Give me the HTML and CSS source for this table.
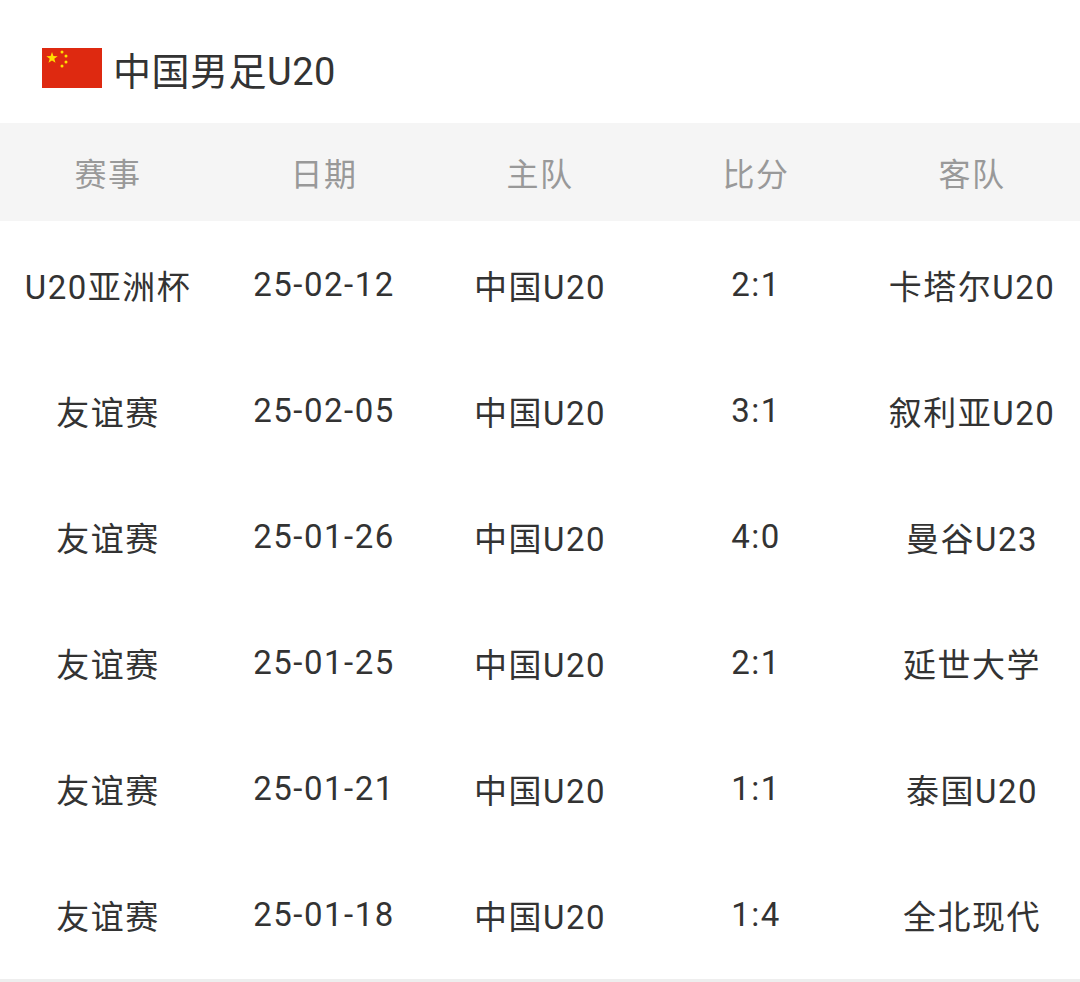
FILE: index.html
```html
<!DOCTYPE html>
<html lang="zh">
<head>
<meta charset="utf-8">
<link rel="stylesheet" href="styles.css">
</head>
<body>
<div class="page">
  <div class="title">
    <svg class="flag" viewBox="0 0 30 20" width="60" height="40">
      <rect width="30" height="20" fill="#de2910"/>
      <g fill="#ffde00">
        <polygon points="5,2 5.71,4.03 7.85,4.07 6.14,5.37 6.76,7.43 5,6.2 3.24,7.43 3.86,5.37 2.15,4.07 4.29,4.03"/>
        <circle cx="10" cy="2" r="0.75"/>
        <circle cx="12" cy="4" r="0.75"/>
        <circle cx="12" cy="7" r="0.75"/>
        <circle cx="10" cy="9" r="0.75"/>
      </g>
    </svg>
    <span class="title-text">中国男足U20</span>
  </div>
  <div class="row head">
    <div>赛事</div><div>日期</div><div>主队</div><div>比分</div><div>客队</div>
  </div>
  <div class="row"><div>U20亚洲杯</div><div>25-02-12</div><div>中国U20</div><div>2:1</div><div>卡塔尔U20</div></div>
  <div class="row"><div>友谊赛</div><div>25-02-05</div><div>中国U20</div><div>3:1</div><div>叙利亚U20</div></div>
  <div class="row"><div>友谊赛</div><div>25-01-26</div><div>中国U20</div><div>4:0</div><div>曼谷U23</div></div>
  <div class="row"><div>友谊赛</div><div>25-01-25</div><div>中国U20</div><div>2:1</div><div>延世大学</div></div>
  <div class="row"><div>友谊赛</div><div>25-01-21</div><div>中国U20</div><div>1:1</div><div>泰国U20</div></div>
  <div class="row"><div>友谊赛</div><div>25-01-18</div><div>中国U20</div><div>1:4</div><div>全北现代</div></div>
  <div class="bottom"></div>
</div>
</body>
</html>
```
FILE: styles.css
```css
html, body {
  margin: 0;
  padding: 0;
  background: #fff;
}
body {
  font-family: "Roboto", "Noto Sans CJK SC", sans-serif;
  color: #333;
}
.page {
  width: 1080px;
}
.title {
  height: 123px;
  display: flex;
  align-items: center;
  padding-left: 42px;
  padding-top: 14px;
  gap: 11px;
  box-sizing: border-box;
}
.flag {
  display: block;
  margin-top: -2px;
}
.title-text {
  font-size: 38px;
  color: #333;
  letter-spacing: 0.5px;
}
.row {
  display: grid;
  grid-template-columns: repeat(5, 1fr);
  height: 126px;
  box-sizing: border-box;
  padding-bottom: 3px;
  align-items: center;
  text-align: center;
  font-size: 33px;
  letter-spacing: 1.5px;
  color: #333;
}
.row.head {
  height: 98px;
  padding-bottom: 0;
  background: #f5f5f5;
  color: #999;
  font-size: 32px;
  margin-bottom: 2px;
}
.bottom {
  height: 6px;
  background: #eeeeee;
}
```
